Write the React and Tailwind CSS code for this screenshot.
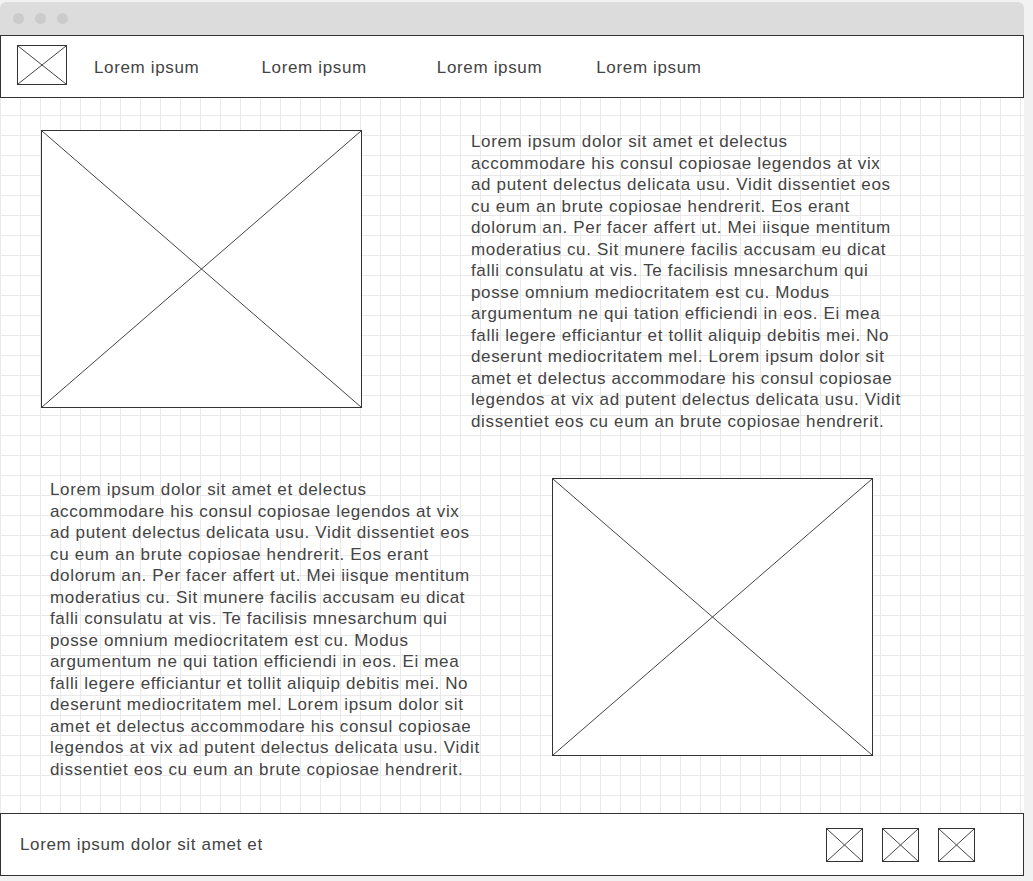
import React from 'react';

const lorem =
  'Lorem ipsum dolor sit amet et delectus accommodare his consul copiosae legendos at vix ad putent delectus delicata usu. Vidit dissentiet eos cu eum an brute copiosae hendrerit. Eos erant dolorum an. Per facer affert ut. Mei iisque mentitum moderatius cu. Sit munere facilis accusam eu dicat falli consulatu at vis. Te facilisis mnesarchum qui posse omnium mediocritatem est cu. Modus argumentum ne qui tation efficiendi in eos. Ei mea falli legere efficiantur et tollit aliquip debitis mei. No deserunt mediocritatem mel. Lorem ipsum dolor sit amet et delectus accommodare his consul copiosae legendos at vix ad putent delectus delicata usu. Vidit dissentiet eos cu eum an brute copiosae hendrerit.';

// Placeholder box with a cross, the usual wireframe image
const Placeholder = ({ className }) => (
  <div className={`border border-[#333] bg-white ${className}`}>
    <svg className="block h-full w-full" viewBox="0 0 100 100" preserveAspectRatio="none">
      <line x1="0" y1="0" x2="100" y2="100" stroke="#444" strokeWidth="1" vectorEffect="non-scaling-stroke" />
      <line x1="100" y1="0" x2="0" y2="100" stroke="#444" strokeWidth="1" vectorEffect="non-scaling-stroke" />
    </svg>
  </div>
);

const navItems = [
  { label: 'Lorem ipsum', cls: 'ml-[27px]' },
  { label: 'Lorem ipsum', cls: 'ml-[62px]' },
  { label: 'Lorem ipsum', cls: 'ml-[70px]' },
  { label: 'Lorem ipsum', cls: 'ml-[54px]' },
];

export default function App() {
  return (
    <div className="h-[881px] w-[1033px] overflow-hidden bg-[#f2f2f2] pt-[2px] font-['Liberation_Sans',Arial,sans-serif] text-[#444]">
      <div className="w-[1024px]">
        {/* Window title bar */}
        <div className="flex h-[33px] items-center gap-[11px] rounded-t-[6px] bg-[#dcdcdc] pl-[13px]">
          <span className="h-[11px] w-[11px] rounded-full bg-[#cbcbcb]" />
          <span className="h-[11px] w-[11px] rounded-full bg-[#cbcbcb]" />
          <span className="h-[11px] w-[11px] rounded-full bg-[#cbcbcb]" />
        </div>

        {/* Navigation */}
        <nav className="flex h-[63px] items-center border border-[#333] bg-white pl-[16px]">
          <Placeholder className="mb-[4px] h-[40px] w-[50px]" />
          {navItems.map((item, i) => (
            <a key={i} className={`mt-[2px] text-[17px] tracking-[0.65px] ${item.cls}`}>
              {item.label}
            </a>
          ))}
        </nav>

        {/* Content on grid paper */}
        <main className="h-[715px] bg-white bg-[linear-gradient(to_right,#e9e9e9_1px,transparent_1px),linear-gradient(to_bottom,#e9e9e9_1px,transparent_1px)] bg-[size:20px_20px] bg-[position:0px_-3px]">
          <section className="flex h-[380px] items-start pl-[41px] pt-[32px]">
            <Placeholder className="h-[278px] w-[321px] shrink-0" />
            <p className="ml-[109px] mt-[1px] w-[434px] text-[17px] leading-[21.5px] tracking-[0.65px]">{lorem}</p>
          </section>
          <section className="flex items-start pl-[50px]">
            <p className="mt-[1px] w-[434px] text-[17px] leading-[21.5px] tracking-[0.65px]">{lorem}</p>
            <Placeholder className="ml-[68px] h-[278px] w-[321px] shrink-0" />
          </section>
        </main>

        {/* Footer */}
        <footer className="flex h-[63px] items-center border border-[#333] bg-white pl-[19px] pr-[48px]">
          <span className="text-[17px] tracking-[0.65px]">Lorem ipsum dolor sit amet et</span>
          <div className="ml-auto flex gap-[19px]">
            <Placeholder className="h-[34px] w-[37px]" />
            <Placeholder className="h-[34px] w-[37px]" />
            <Placeholder className="h-[34px] w-[37px]" />
          </div>
        </footer>
      </div>
    </div>
  );
}
